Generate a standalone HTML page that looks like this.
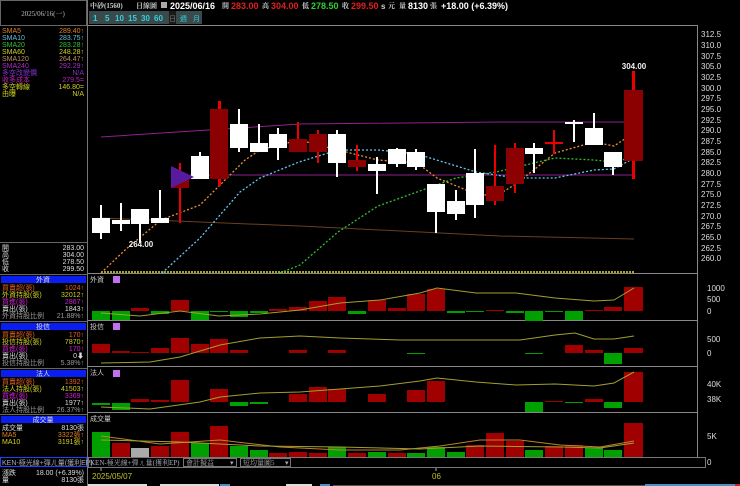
<!DOCTYPE html>
<html><head><meta charset="utf-8"><style>
html,body{margin:0;padding:0;background:#000;width:740px;height:486px;overflow:hidden}
svg{display:block}
text{font-family:"Liberation Sans","Noto Sans CJK TC",sans-serif}
.s{font-family:"Liberation Serif","Noto Serif CJK SC","Noto Sans CJK TC",serif;font-size:7px}
.ax{font-size:8px;fill:#ddd;font-family:"Liberation Sans",sans-serif}
</style></head><body>
<svg width="740" height="486" viewBox="0 0 740 486" xmlns="http://www.w3.org/2000/svg">
<rect width="740" height="486" fill="#000"/>
<rect x="0.5" y="0.5" width="86" height="25" fill="none" stroke="#666"/>
<line x1="87.5" y1="0" x2="87.5" y2="486" stroke="#777"/>
<text x="43" y="16" class="s" fill="#bbb" text-anchor="middle">2025/06/16(一)</text>
<g class="s">
<text x="2" y="33" fill="#e08020">SMA5</text><text x="84" y="33" fill="#e08020" text-anchor="end">289.40↑</text>
<text x="2" y="40" fill="#60c0e0">SMA10</text><text x="84" y="40" fill="#60c0e0" text-anchor="end">283.75↑</text>
<text x="2" y="47" fill="#30c030">SMA20</text><text x="84" y="47" fill="#30c030" text-anchor="end">283.28↑</text>
<text x="2" y="54" fill="#d0d020">SMA60</text><text x="84" y="54" fill="#d0d020" text-anchor="end">248.28↑</text>
<text x="2" y="61" fill="#c09060">SMA120</text><text x="84" y="61" fill="#c09060" text-anchor="end">264.47↑</text>
<text x="2" y="68" fill="#a030c0">SMA240</text><text x="84" y="68" fill="#a030c0" text-anchor="end">292.29↑</text>
<text x="2" y="75" fill="#8030d0">多空改變價</text><text x="84" y="75" fill="#8030d0" text-anchor="end">N/A</text>
<text x="2" y="82" fill="#c020c0">收多成本</text><text x="84" y="82" fill="#c020c0" text-anchor="end">279.5=</text>
<text x="2" y="89" fill="#d0d020">多空轉線</text><text x="84" y="89" fill="#d0d020" text-anchor="end">146.80=</text>
<text x="2" y="96" fill="#d0d020">由曝</text><text x="84" y="96" fill="#d0d020" text-anchor="end">N/A</text>
<line x1="0" y1="242.5" x2="87" y2="242.5" stroke="#666"/>
<text x="2" y="250" fill="#ddd">開</text><text x="84" y="250" fill="#ddd" text-anchor="end">283.00</text>
<text x="2" y="257" fill="#ddd">高</text><text x="84" y="257" fill="#ddd" text-anchor="end">304.00</text>
<text x="2" y="264" fill="#ddd">低</text><text x="84" y="264" fill="#ddd" text-anchor="end">278.50</text>
<text x="2" y="271" fill="#ddd">收</text><text x="84" y="271" fill="#ddd" text-anchor="end">299.50</text>
<line x1="0" y1="274.5" x2="87" y2="274.5" stroke="#666"/>
<rect x="1" y="276" width="85" height="7" fill="#0a1ef0"/><text x="43" y="282" fill="#ddd" text-anchor="middle">外資</text>
<text x="2" y="290" fill="#e06020">買賣超(張)</text><text x="84" y="290" fill="#e06020" text-anchor="end">1024↑</text>
<text x="2" y="297" fill="#d0d020">外資持股(張)</text><text x="84" y="297" fill="#d0d020" text-anchor="end">32012↑</text>
<text x="2" y="304" fill="#d020d0">買進(張)</text><text x="84" y="304" fill="#d020d0" text-anchor="end">2867↑</text>
<text x="2" y="311" fill="#ddd">賣出(張)</text><text x="84" y="311" fill="#ddd" text-anchor="end">1843↑</text>
<text x="2" y="318" fill="#999">外資持股比例</text><text x="84" y="318" fill="#999" text-anchor="end">21.88%↑</text>
<line x1="0" y1="321.5" x2="87" y2="321.5" stroke="#666"/>
<rect x="1" y="323" width="85" height="7" fill="#0a1ef0"/><text x="43" y="329" fill="#ddd" text-anchor="middle">投信</text>
<text x="2" y="337" fill="#e06020">買賣超(張)</text><text x="84" y="337" fill="#e06020" text-anchor="end">170↑</text>
<text x="2" y="344" fill="#d0d020">投信持股(張)</text><text x="84" y="344" fill="#d0d020" text-anchor="end">7870↑</text>
<text x="2" y="351" fill="#d020d0">買進(張)</text><text x="84" y="351" fill="#d020d0" text-anchor="end">170↑</text>
<text x="2" y="358" fill="#ddd">賣出(張)</text><text x="84" y="358" fill="#ddd" text-anchor="end">0⬇</text>
<text x="2" y="365" fill="#999">投信持股比例</text><text x="84" y="365" fill="#999" text-anchor="end">5.38%↑</text>
<line x1="0" y1="368.5" x2="87" y2="368.5" stroke="#666"/>
<rect x="1" y="370" width="85" height="7" fill="#0a1ef0"/><text x="43" y="376" fill="#ddd" text-anchor="middle">法人</text>
<text x="2" y="384" fill="#e06020">買賣超(張)</text><text x="84" y="384" fill="#e06020" text-anchor="end">1392↑</text>
<text x="2" y="391" fill="#d0d020">法人持股(張)</text><text x="84" y="391" fill="#d0d020" text-anchor="end">41503↑</text>
<text x="2" y="398" fill="#d020d0">買進(張)</text><text x="84" y="398" fill="#d020d0" text-anchor="end">3369↑</text>
<text x="2" y="405" fill="#ddd">賣出(張)</text><text x="84" y="405" fill="#ddd" text-anchor="end">1977↑</text>
<text x="2" y="412" fill="#999">法人持股比例</text><text x="84" y="412" fill="#999" text-anchor="end">26.37%↑</text>
<line x1="0" y1="414.5" x2="87" y2="414.5" stroke="#666"/>
<rect x="1" y="416" width="85" height="7" fill="#0a1ef0"/><text x="43" y="422" fill="#ddd" text-anchor="middle">成交量</text>
<text x="2" y="430" fill="#ddd">成交量</text><text x="84" y="430" fill="#ddd" text-anchor="end">8130張</text>
<text x="2" y="437" fill="#e08020">MA5</text><text x="84" y="437" fill="#e08020" text-anchor="end">3322張↑</text>
<text x="2" y="444" fill="#d0d020">MA10</text><text x="84" y="444" fill="#d0d020" text-anchor="end">3191張↑</text>
<rect x="0.5" y="457.5" width="86" height="9" fill="none" stroke="#2040ff"/>
<text x="2" y="465" fill="#aab">KEN-極光線+彈ㄦ量(獲利EP)</text>
<text x="2" y="475" fill="#ddd">漲跌</text><text x="84" y="475" fill="#ddd" text-anchor="end">18.00 (+6.39%)</text>
<text x="2" y="482" fill="#ddd">量</text><text x="84" y="482" fill="#ddd" text-anchor="end">8130張</text>
</g>
<g font-size="8" font-weight="bold">
<text x="90" y="8" class="s" fill="#ccc">中砂(1560)</text>
<text x="136" y="8" class="s" fill="#ccc">日線圖</text>
<rect x="161" y="2" width="6" height="6" fill="#aaa"/>
<text x="170" y="9" fill="#fff" font-size="9">2025/06/16</text>
<text x="222" y="8" class="s" fill="#ccc">開</text><text x="231" y="9" fill="#e02020" font-size="9">283.00</text>
<text x="262" y="8" class="s" fill="#ccc">高</text><text x="271" y="9" fill="#e02020" font-size="9">304.00</text>
<text x="302" y="8" class="s" fill="#ccc">低</text><text x="311" y="9" fill="#30d030" font-size="9">278.50</text>
<text x="342" y="8" class="s" fill="#ccc">收</text><text x="351" y="9" fill="#e02020" font-size="9">299.50</text>
<text x="381" y="9" fill="#ccc" font-size="8">s</text><text x="388" y="8" class="s" fill="#ccc">元</text>
<text x="399" y="8" class="s" fill="#ccc">量</text><text x="408" y="9" fill="#fff" font-size="9">8130</text><text x="430" y="8" class="s" fill="#ccc">張</text>
<text x="441" y="9" fill="#fff" font-size="9">+18.00 (+6.39%)</text>
</g>
<rect x="89" y="11" width="113" height="13" fill="#3a4a4a"/>
<rect x="169" y="11" width="33" height="13" fill="#1a1a1a"/>
<rect x="176" y="11" width="26" height="13" fill="#3a4a4a"/>
<g font-size="8" font-weight="bold" fill="#30d0e0">
<text x="93" y="21">1</text><text x="105" y="21">5</text><text x="115" y="21">10</text><text x="128" y="21">15</text><text x="141" y="21">30</text><text x="154" y="21">60</text>
</g>
<g class="s" fill="#30d0e0"><text x="169" y="21" fill="#777">日</text><text x="180" y="21">週</text><text x="193" y="21">月</text></g>
<line x1="88" y1="25.5" x2="698" y2="25.5" stroke="#888"/>
<line x1="697.5" y1="25" x2="697.5" y2="458" stroke="#888"/>
<g stroke="#888"><line x1="88" y1="273.5" x2="698" y2="273.5"/><line x1="88" y1="320.5" x2="698" y2="320.5"/><line x1="88" y1="366.5" x2="698" y2="366.5"/><line x1="88" y1="412.5" x2="698" y2="412.5"/><line x1="88" y1="457.5" x2="706" y2="457.5"/></g>
<g class="ax">
<text x="701" y="37">312.5</text><text x="701" y="48">310.0</text><text x="701" y="59">307.5</text><text x="701" y="69">305.0</text><text x="701" y="80">302.5</text><text x="701" y="91">300.0</text><text x="701" y="101">297.5</text><text x="701" y="112">295.0</text><text x="701" y="123">292.5</text><text x="701" y="133">290.0</text><text x="701" y="144">287.5</text><text x="701" y="155">285.0</text><text x="701" y="165">282.5</text><text x="701" y="176">280.0</text><text x="701" y="187">277.5</text><text x="701" y="197">275.0</text><text x="701" y="208">272.5</text><text x="701" y="219">270.0</text><text x="701" y="229">267.5</text><text x="701" y="240">265.0</text><text x="701" y="251">262.5</text><text x="701" y="261">260.0</text>
<text x="707" y="291">1000</text><text x="707" y="302">500</text><text x="707" y="314">0</text>
<text x="707" y="342">500</text><text x="707" y="356">0</text>
<text x="707" y="387">40K</text><text x="707" y="402">38K</text>
<text x="707" y="439">5K</text><text x="707" y="465">0</text>
</g>
<polyline points="101,137 300,124 500,122 634,122" fill="none" stroke="#902090" stroke-width="1"/>
<line x1="190" y1="175" x2="634" y2="175" stroke="#902090"/>
<polyline points="101,218 300,226 500,236 634,239" fill="none" stroke="#6a4020"/>
<line x1="101" y1="272" x2="634" y2="272" stroke="#e0e020" stroke-dasharray="2,1" stroke-width="1.5"/>
<g fill="none" stroke-dasharray="2,2" stroke-width="1.3">
<polyline stroke="#f09030" points="101,273 125,250 161,220 200,205 220,185 245,160 260,150 299,140 338,150 378,160 417,163 437,178 476,194 496,196 516,184 540,165 555,153 594,142 614,146 634,133"/>
<polyline stroke="#60c8f0" points="162,273 200,238 220,215 240,192 260,178 299,162 338,150 378,150 417,154 476,172 516,178 555,178 594,170 614,169 634,158"/>
<polyline stroke="#30c030" points="280,273 300,265 338,232 378,206 417,192 456,178 496,172 555,158 594,160 614,162 634,157"/>
</g>
<g fill="#fff">
<rect x="100" y="205" width="2" height="34"/><rect x="92" y="218" width="18" height="15"/>
<rect x="120" y="203" width="2" height="28"/><rect x="112" y="220" width="18" height="4"/>
<rect x="139" y="209" width="2" height="34"/><rect x="131" y="209" width="18" height="15"/>
<rect x="159" y="190" width="2" height="33"/><rect x="151" y="218" width="18" height="5"/>
<rect x="199" y="152" width="2" height="27"/><rect x="191" y="156" width="18" height="23"/>
<rect x="238" y="109" width="2" height="43"/><rect x="230" y="124" width="18" height="24"/>
<rect x="258" y="124" width="2" height="28"/><rect x="250" y="143" width="18" height="9"/>
<rect x="277" y="128" width="2" height="32"/><rect x="269" y="134" width="18" height="14"/>
<rect x="336" y="130" width="2" height="47"/><rect x="328" y="134" width="18" height="29"/>
<rect x="376" y="157" width="2" height="37"/><rect x="368" y="164" width="18" height="7"/>
<rect x="396" y="148" width="2" height="19"/><rect x="388" y="149" width="18" height="15"/>
<rect x="415" y="149" width="2" height="21"/><rect x="407" y="152" width="18" height="15"/>
<rect x="435" y="184" width="2" height="49"/><rect x="427" y="184" width="18" height="28"/>
<rect x="455" y="190" width="2" height="30"/><rect x="447" y="201" width="18" height="13"/>
<rect x="474" y="149" width="2" height="69"/><rect x="466" y="173" width="18" height="32"/>
<rect x="533" y="143" width="2" height="30"/><rect x="525" y="148" width="18" height="6"/>
<rect x="573" y="120" width="2" height="22"/><rect x="565" y="122" width="18" height="2"/>
<rect x="593" y="113" width="2" height="32"/><rect x="585" y="128" width="18" height="17"/>
<rect x="612" y="152" width="2" height="23"/><rect x="604" y="152" width="18" height="15"/>
</g>
<g>
<rect x="179" y="163" width="2" height="60" fill="#e00"/><rect x="171" y="175" width="18" height="13" fill="#8b0000"/>
<polygon points="171,166 194,177 171,188" fill="#5a1aa0"/>
<rect x="218" y="101" width="3" height="85" fill="#e00"/><rect x="210" y="109" width="18" height="70" fill="#8b0000"/>
<rect x="297" y="122" width="2" height="30" fill="#e00"/><rect x="289" y="139" width="18" height="13" fill="#8b0000"/>
<rect x="317" y="130" width="2" height="33" fill="#e00"/><rect x="309" y="134" width="18" height="18" fill="#8b0000"/>
<rect x="356" y="145" width="2" height="26" fill="#e00"/><rect x="348" y="160" width="18" height="7" fill="#8b0000"/>
<rect x="494" y="145" width="2" height="60" fill="#e00"/><rect x="486" y="186" width="18" height="15" fill="#8b0000"/>
<rect x="514" y="143" width="2" height="50" fill="#e00"/><rect x="506" y="148" width="18" height="36" fill="#8b0000"/>
<rect x="553" y="130" width="2" height="24" fill="#e00"/><rect x="545" y="142" width="18" height="2" fill="#e00"/>
<rect x="632" y="71" width="3" height="108" fill="#e00"/><rect x="624" y="90" width="19" height="71" fill="#8b0000"/>
</g>
<text x="634" y="69" font-size="8" fill="#eee" text-anchor="middle" font-weight="bold">304.00</text>
<text x="141" y="247" font-size="8" fill="#eee" text-anchor="middle" font-weight="bold">264.00</text>
<g class="s" fill="#ccc"><text x="90" y="282">外資</text><text x="90" y="329">投信</text><text x="90" y="375">法人</text><text x="90" y="421">成交量</text></g>
<g fill="#c070f0"><rect x="113" y="276" width="7" height="7"/><rect x="113" y="323" width="7" height="7"/><rect x="113" y="370" width="7" height="7"/></g>
<g fill="#00a000">
<rect x="92" y="311" width="18" height="9"/><rect x="112" y="311" width="18" height="9"/><rect x="151" y="311" width="18" height="3"/><rect x="191" y="311" width="18" height="9"/><rect x="210" y="311" width="18" height="1"/><rect x="230" y="311" width="18" height="6"/><rect x="250" y="311" width="18" height="2"/><rect x="348" y="311" width="18" height="3"/><rect x="447" y="311" width="18" height="2"/><rect x="466" y="311" width="18" height="1"/><rect x="506" y="311" width="18" height="2"/><rect x="525" y="311" width="18" height="10"/><rect x="545" y="311" width="18" height="1"/><rect x="565" y="311" width="18" height="9"/>
</g>
<g fill="#a00000">
<rect x="131" y="308" width="18" height="3"/><rect x="171" y="300" width="18" height="11"/><rect x="269" y="309" width="18" height="2"/><rect x="289" y="307" width="18" height="4"/><rect x="309" y="301" width="18" height="10"/><rect x="328" y="297" width="18" height="14"/><rect x="368" y="300" width="18" height="11"/><rect x="388" y="308" width="18" height="3"/><rect x="407" y="294" width="18" height="17"/><rect x="427" y="289" width="18" height="22"/><rect x="486" y="310" width="18" height="1"/><rect x="585" y="310" width="18" height="1"/><rect x="604" y="307" width="18" height="4"/><rect x="624" y="287" width="19" height="24"/>
</g>
<polyline fill="none" stroke="#a0a030" points="101,313 140,316 180,311 219,316 260,314 300,310 340,303 380,300 420,293 437,288 476,293 516,293 555,298 594,301 614,300 634,288"/>
<g fill="#a00000">
<rect x="92" y="344" width="18" height="9"/><rect x="112" y="351" width="18" height="2"/><rect x="131" y="352" width="18" height="1"/><rect x="151" y="348" width="18" height="5"/><rect x="171" y="338" width="18" height="15"/><rect x="191" y="344" width="18" height="9"/><rect x="210" y="339" width="18" height="14"/><rect x="230" y="350" width="18" height="3"/><rect x="289" y="350" width="18" height="3"/><rect x="328" y="350" width="18" height="3"/><rect x="565" y="345" width="18" height="8"/><rect x="585" y="350" width="18" height="3"/><rect x="624" y="348" width="19" height="5"/>
</g>
<g fill="#00a000"><rect x="525" y="353" width="18" height="1"/><rect x="604" y="353" width="18" height="11"/><rect x="407" y="353" width="18" height="1"/></g>
<polyline fill="none" stroke="#a0a030" points="101,363 150,362 180,357 220,345 260,338 300,336 340,338 400,340 460,340 520,340 555,335 575,333 594,339 614,339 634,336"/>
<g fill="#a00000">
<rect x="131" y="399" width="18" height="3"/><rect x="151" y="400" width="18" height="2"/><rect x="171" y="380" width="18" height="22"/><rect x="210" y="389" width="18" height="13"/><rect x="289" y="394" width="18" height="8"/><rect x="309" y="387" width="18" height="15"/><rect x="328" y="389" width="18" height="13"/><rect x="368" y="394" width="18" height="8"/><rect x="407" y="390" width="18" height="12"/><rect x="427" y="381" width="18" height="21"/><rect x="545" y="401" width="18" height="1"/><rect x="585" y="399" width="18" height="3"/><rect x="624" y="372" width="19" height="30"/>
</g>
<g fill="#00a000"><rect x="92" y="403" width="18" height="2"/><rect x="112" y="403" width="18" height="7"/><rect x="230" y="402" width="18" height="4"/><rect x="250" y="402" width="18" height="2"/><rect x="525" y="402" width="18" height="10"/><rect x="565" y="402" width="18" height="1"/><rect x="604" y="402" width="18" height="6"/></g>
<polyline fill="none" stroke="#a0a030" points="101,407 150,409 200,402 220,397 260,393 300,392 340,389 380,386 420,381 437,378 476,382 516,385 555,384 594,386 614,383 634,372"/>
<g fill="#00a000">
<rect x="92" y="432" width="18" height="25"/><rect x="191" y="443" width="18" height="14"/><rect x="230" y="446" width="18" height="11"/><rect x="250" y="450" width="18" height="7"/><rect x="328" y="447" width="18" height="10"/><rect x="368" y="452" width="18" height="5"/><rect x="407" y="453" width="18" height="4"/><rect x="427" y="447" width="18" height="10"/><rect x="447" y="452" width="18" height="5"/><rect x="525" y="450" width="18" height="7"/><rect x="585" y="448" width="18" height="9"/><rect x="604" y="450" width="18" height="7"/>
</g>
<rect x="131" y="448" width="18" height="9" fill="#aaa"/>
<g fill="#a00000">
<rect x="112" y="443" width="18" height="14"/><rect x="151" y="446" width="18" height="11"/><rect x="171" y="432" width="18" height="25"/><rect x="210" y="426" width="18" height="31"/><rect x="269" y="453" width="18" height="4"/><rect x="289" y="452" width="18" height="5"/><rect x="309" y="453" width="18" height="4"/><rect x="348" y="453" width="18" height="4"/><rect x="388" y="453" width="18" height="4"/><rect x="466" y="445" width="18" height="12"/><rect x="486" y="433" width="18" height="24"/><rect x="506" y="441" width="18" height="16"/><rect x="545" y="446" width="18" height="11"/><rect x="565" y="445" width="18" height="12"/><rect x="624" y="423" width="19" height="34"/>
</g>
<polyline fill="none" stroke="#c08030" points="101,436 160,444 220,440 280,447 340,450 400,450 440,446 480,440 520,440 560,445 600,447 634,441"/>
<polyline fill="none" stroke="#a0a030" points="101,440 180,442 260,446 340,447 420,449 480,446 560,447 600,448 634,443"/>
<rect x="88.5" y="457.5" width="617" height="10" fill="none" stroke="#777"/>
<text x="90" y="465" class="s" fill="#aab">KEN-極光線+彈ㄦ量(獲利EP)</text>
<rect x="183.5" y="458.5" width="53" height="8" fill="none" stroke="#777"/><text x="186" y="465" class="s" fill="#aaa">會計擬益</text><text x="230" y="465" class="s" fill="#aaa">▾</text>
<rect x="240.5" y="458.5" width="50" height="8" fill="none" stroke="#777"/><text x="243" y="465" class="s" fill="#aaa">短均量圖5</text><text x="285" y="465" class="s" fill="#aaa">▾</text>
<line x1="101" y1="468" x2="101" y2="471" stroke="#aaa"/><line x1="436" y1="468" x2="436" y2="471" stroke="#aaa"/>
<text x="92" y="479" font-size="8" fill="#c0c020">2025/05/07</text>
<text x="432" y="479" font-size="8" fill="#c0c020">06</text>
<g fill="#ddd"><rect x="88" y="484" width="59" height="2"/><rect x="160" y="484" width="59" height="2"/><rect x="286" y="484" width="26" height="2"/></g>
<rect x="220" y="484" width="10" height="2" fill="#4a90c0"/>
<rect x="320" y="484" width="10" height="2" fill="#4a90c0"/>
<rect x="333" y="485" width="312" height="1" fill="#555"/>
<rect x="645" y="484" width="90" height="2" fill="#4a90c0"/>
<rect x="735" y="484" width="5" height="2" fill="#d02020"/>
</svg>
</body></html>
